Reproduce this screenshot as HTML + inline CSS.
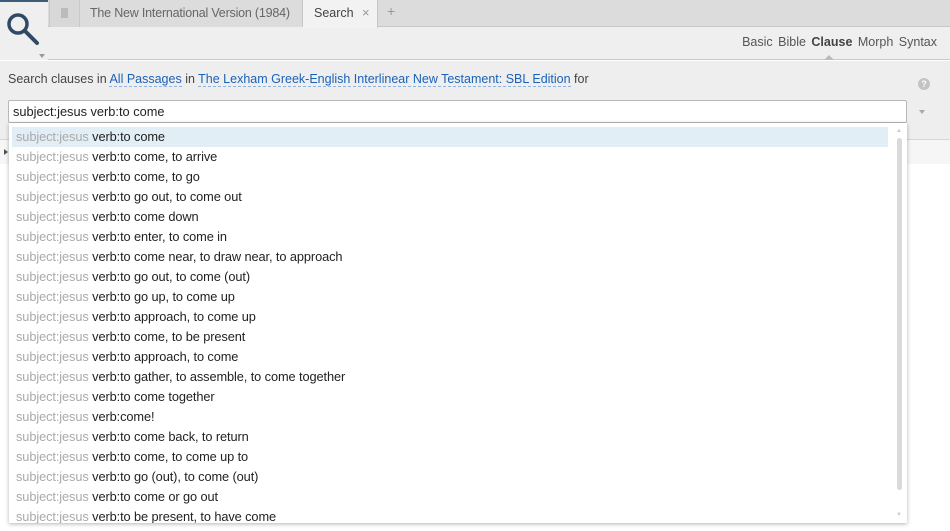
<!DOCTYPE html>
<html><head><meta charset="utf-8"><style>
*{box-sizing:border-box;margin:0;padding:0}
body{width:950px;height:531px;overflow:hidden;background:#fff;font-family:"Liberation Sans",sans-serif;position:relative;color:#333}
.abs{position:absolute}
.top{left:0;top:0;width:950px;height:27px;background:#dcdcdc;border-bottom:1px solid #c8c8c8}
.hdr{left:0;top:27px;width:950px;height:33px;background:#efefef;border-bottom:1px solid #c9c9c9}
.panel{left:0;top:61px;width:950px;height:79px;background:#eeeeee;border-bottom:1px solid #d8d8d8}
.strip{left:0;top:140px;width:950px;height:24px;background:#f6f6f6}
.tab{top:0;height:27px;font-size:12.5px;line-height:26px;color:#666;border-right:1px solid #c8c8c8;white-space:nowrap;overflow:hidden}
.link{color:#1a62b8;border-bottom:1px dashed #8fb2de}
.row{position:absolute;left:12px;width:876px;height:20px;font-size:12.8px;line-height:19px;padding-left:4px;color:#222;white-space:nowrap;letter-spacing:-.1px}
.row span{color:#aaa}
</style></head><body>
<div class="abs top"></div>
<div class="abs hdr"></div>
<div class="abs" style="left:0;top:0;width:48px;height:60px;background:#efefef"></div>
<div class="abs" style="left:0;top:0;width:48px;height:2px;background:#3d5a78"></div>
<svg class="abs" style="left:4px;top:10px" width="36" height="36" viewBox="0 0 36 36"><circle cx="14" cy="14" r="9" fill="none" stroke="#2f4a66" stroke-width="3.5"/><path d="M21 21 L33 33" stroke="#2f4a66" stroke-width="4" stroke-linecap="round"/></svg>
<div class="abs" style="left:39px;top:54px;width:0;height:0;border-left:3px solid transparent;border-right:3px solid transparent;border-top:4px solid #999"></div>
<div class="abs tab" style="left:49px;width:31px;background:#d8d8d8;border-left:1px solid #c8c8c8"><div style="position:absolute;left:11px;top:8px;width:7px;height:10px;background:#bbb"></div></div>
<div class="abs tab" style="left:80px;width:223px;padding-left:10px;background:#dcdcdc;letter-spacing:-.2px">The New International Version (1984)</div>
<div class="abs tab" style="left:303px;width:75px;padding-left:11px;background:#f2f2f2;color:#444;height:28px">Search<span style="position:absolute;left:59px;color:#999;font-size:13px">×</span></div>
<div class="abs" style="left:387px;top:3px;font-size:14px;color:#999">+</div>
<div class="abs" style="right:13px;top:35px;font-size:12.5px;color:#555;word-spacing:2px">Basic Bible <b style="color:#444">Clause</b> Morph Syntax</div>
<div class="abs" style="left:824px;top:55px;width:0;height:0;border-left:5px solid transparent;border-right:5px solid transparent;border-bottom:5px solid #bbb"></div>
<div class="abs panel"></div>
<div class="abs strip"></div>
<div class="abs" style="left:8px;top:72px;font-size:12.5px;color:#444">Search clauses in <span class="link">All Passages</span> in <span class="link">The Lexham Greek-English Interlinear New Testament: SBL Edition</span> for</div>
<div class="abs" style="left:918px;top:78px;width:12px;height:12px;border-radius:50%;background:#c4c4c4;color:#fff;font-size:9px;font-weight:bold;text-align:center;line-height:12px">?</div>
<div class="abs" style="left:8px;top:100px;width:899px;height:23px;background:#fff;border:1px solid #b8b8b8;border-radius:2px;font-size:12.8px;line-height:21px;padding-left:4px;color:#222">subject:jesus verb:to come</div>
<div class="abs" style="left:919px;top:110px;width:0;height:0;border-left:3px solid transparent;border-right:3px solid transparent;border-top:4px solid #aaa"></div>
<div class="abs" style="left:4px;top:149px;width:0;height:0;border-top:3px solid transparent;border-bottom:3px solid transparent;border-left:4px solid #555"></div>
<div class="abs" style="left:9px;top:123px;width:898px;height:400px;background:#fff;box-shadow:0 1px 4px rgba(0,0,0,.3);overflow:hidden">
<div class="abs" style="left:3px;top:4px;width:876px;height:20px;background:#e1eef6"></div>
<div class="abs" style="left:888px;top:15px;width:5px;height:352px;background:#dadada;border-radius:3px"></div>
<div class="abs" style="left:887px;top:5px;font-size:6px;color:#ccc">▲</div>
<div class="abs" style="left:887px;top:389px;font-size:6px;color:#ccc">▼</div>
</div>
<div class="abs" style="left:0;top:0">
<div class="row" style="top:127px"><span>subject:jesus</span> verb:to come</div>
<div class="row" style="top:147px"><span>subject:jesus</span> verb:to come, to arrive</div>
<div class="row" style="top:167px"><span>subject:jesus</span> verb:to come, to go</div>
<div class="row" style="top:187px"><span>subject:jesus</span> verb:to go out, to come out</div>
<div class="row" style="top:207px"><span>subject:jesus</span> verb:to come down</div>
<div class="row" style="top:227px"><span>subject:jesus</span> verb:to enter, to come in</div>
<div class="row" style="top:247px"><span>subject:jesus</span> verb:to come near, to draw near, to approach</div>
<div class="row" style="top:267px"><span>subject:jesus</span> verb:to go out, to come (out)</div>
<div class="row" style="top:287px"><span>subject:jesus</span> verb:to go up, to come up</div>
<div class="row" style="top:307px"><span>subject:jesus</span> verb:to approach, to come up</div>
<div class="row" style="top:327px"><span>subject:jesus</span> verb:to come, to be present</div>
<div class="row" style="top:347px"><span>subject:jesus</span> verb:to approach, to come</div>
<div class="row" style="top:367px"><span>subject:jesus</span> verb:to gather, to assemble, to come together</div>
<div class="row" style="top:387px"><span>subject:jesus</span> verb:to come together</div>
<div class="row" style="top:407px"><span>subject:jesus</span> verb:come!</div>
<div class="row" style="top:427px"><span>subject:jesus</span> verb:to come back, to return</div>
<div class="row" style="top:447px"><span>subject:jesus</span> verb:to come, to come up to</div>
<div class="row" style="top:467px"><span>subject:jesus</span> verb:to go (out), to come (out)</div>
<div class="row" style="top:487px"><span>subject:jesus</span> verb:to come or go out</div>
<div class="row" style="top:507px;height:16px;overflow:hidden"><span>subject:jesus</span> verb:to be present, to have come</div>
</div>
</body></html>
